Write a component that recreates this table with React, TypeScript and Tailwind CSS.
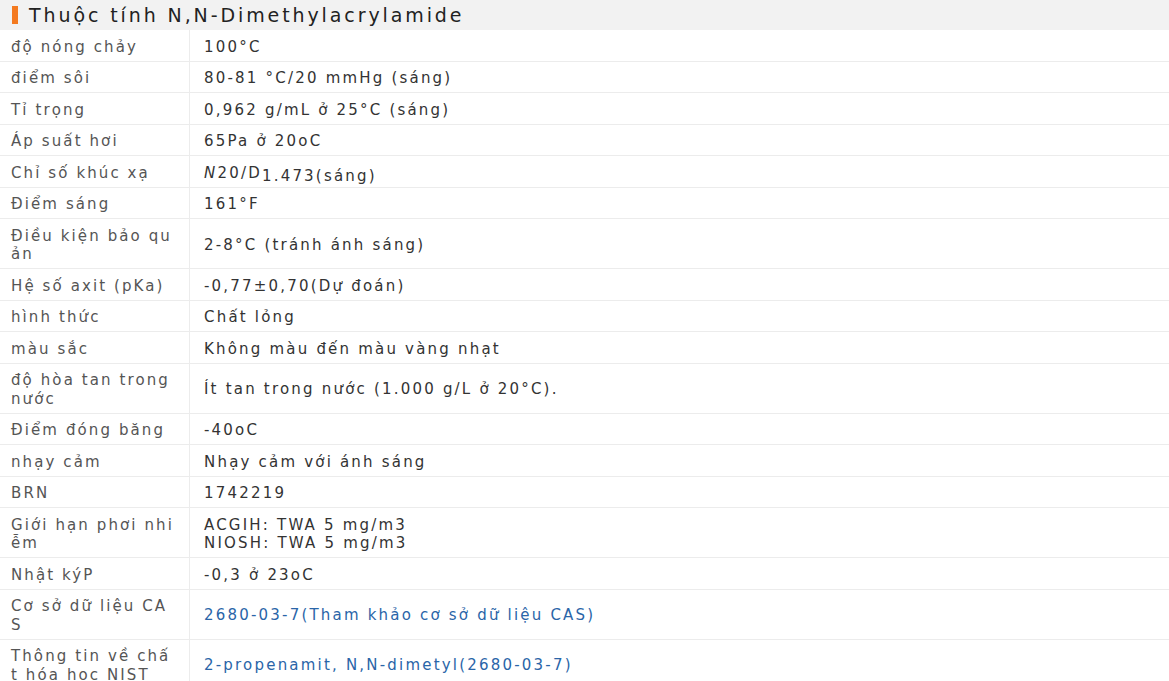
import React from "react";

type Row = { label: React.ReactNode; value: React.ReactNode; link?: boolean; tall?: boolean };

const rows: Row[] = [
  { label: "độ nóng chảy", value: "100°C" },
  { label: "điểm sôi", value: "80-81 °C/20 mmHg (sáng)" },
  { label: "Tỉ trọng", value: "0,962 g/mL ở 25°C (sáng)" },
  { label: "Áp suất hơi", value: "65Pa ở 20oC" },
  {
    label: "Chỉ số khúc xạ",
    value: (
      <span>
        <i>N</i>20/D<span className="relative top-[3px]">1.473(sáng)</span>
      </span>
    ),
  },
  { label: "Điểm sáng", value: "161°F" },
  { label: <>Điều kiện bảo qu<br />ản</>, value: "2-8°C (tránh ánh sáng)", tall: true },
  { label: "Hệ số axit (pKa)", value: "-0,77±0,70(Dự đoán)" },
  { label: "hình thức", value: "Chất lỏng" },
  { label: "màu sắc", value: "Không màu đến màu vàng nhạt" },
  { label: <>độ hòa tan trong<br />nước</>, value: "Ít tan trong nước (1.000 g/L ở 20°C).", tall: true },
  { label: "Điểm đóng băng", value: "-40oC" },
  { label: "nhạy cảm", value: "Nhạy cảm với ánh sáng" },
  { label: "BRN", value: "1742219" },
  {
    label: <>Giới hạn phơi nhi<br />ễm</>,
    value: (
      <>
        ACGIH: TWA 5 mg/m3
        <br />
        NIOSH: TWA 5 mg/m3
      </>
    ),
    tall: true,
  },
  { label: "Nhật kýP", value: "-0,3 ở 23oC" },
  { label: <>Cơ sở dữ liệu CA<br />S</>, value: "2680-03-7(Tham khảo cơ sở dữ liệu CAS)", link: true, tall: true },
  { label: <>Thông tin về chấ<br />t hóa học NIST</>, value: "2-propenamit, N,N-dimetyl(2680-03-7)", link: true, tall: true },
];

export default function App() {
  return (
    <div
      className="w-[1169px] h-[681px] overflow-hidden bg-white"
      style={{ fontFamily: '"DejaVu Sans", "Noto Sans", sans-serif' }}
    >
      <div className="h-[30px] bg-[#f2f2f2] flex items-center pl-[12px]">
        <div className="w-[6px] h-[18px] bg-[#f47a20]" />
        <div className="ml-[11px] text-[19px] leading-[30px] text-[#222] tracking-[2.9px]">
          Thuộc tính N,N-Dimethylacrylamide
        </div>
      </div>
      {rows.map((r, i) => (
        <div key={i} className="flex border-b border-[#ececec]">
          <div className="w-[190px] shrink-0 border-r border-[#ececec] pl-[11px] pt-[7.5px] pb-[4.5px] text-[15px] leading-[18.5px] text-[#555] tracking-[2.1px]">
            {r.label}
          </div>
          <div
            className={
              "flex-1 flex items-center pl-[14px] pt-[7.5px] pb-[4.5px] text-[15px] leading-[18.5px] tracking-[2.2px] " +
              (r.link ? "text-[#2a65a8]" : "text-[#333]")
            }
          >
            <div>{r.value}</div>
          </div>
        </div>
      ))}
    </div>
  );
}
